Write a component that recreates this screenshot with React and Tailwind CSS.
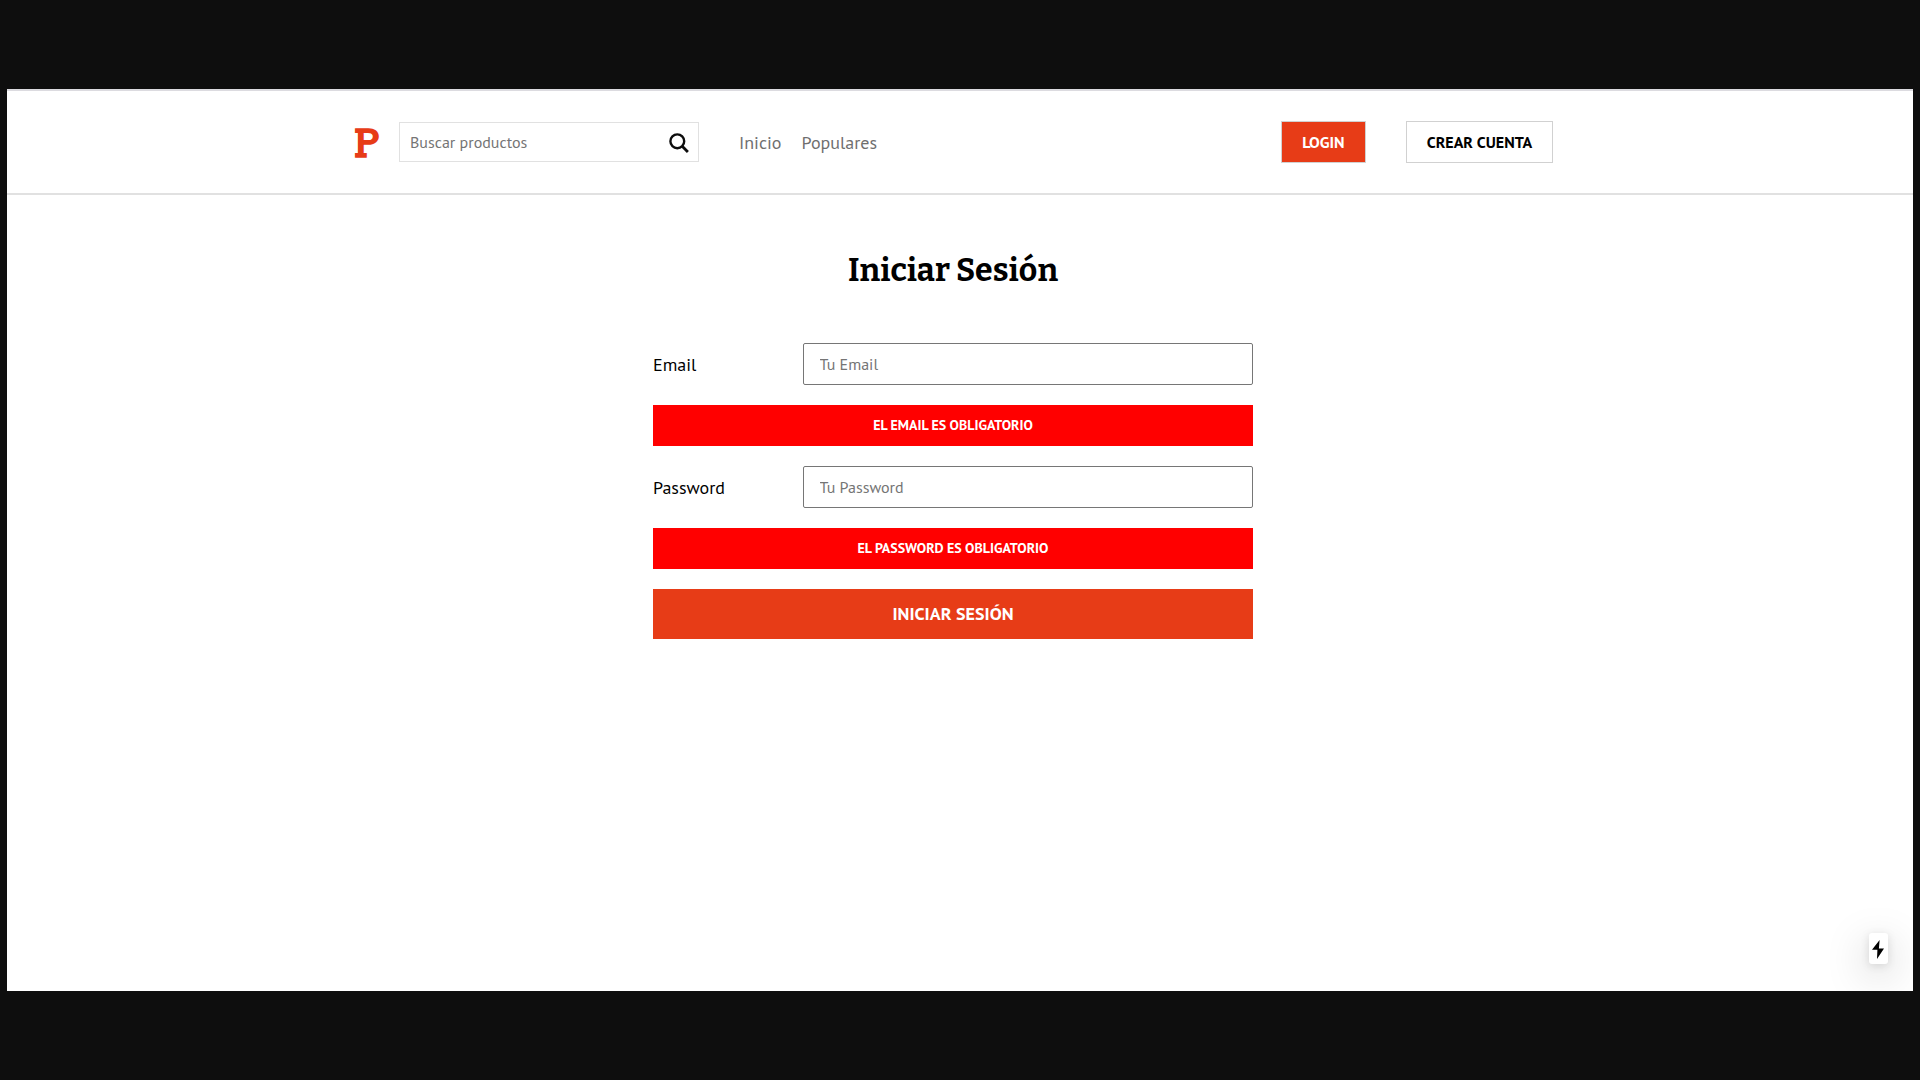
const sans = "font-['PT_Sans','Noto_Sans',sans-serif]";
const heading = "font-['Roboto_Slab','Bitter','DejaVu_Serif_Condensed',serif]";
const logo = "font-['Roboto_Slab','Arvo','DejaVu_Serif_Condensed',serif]";

function Field({ label, type, placeholder, error }) {
  return (
    <>
      <div className="mb-5 flex h-[42px] items-center">
        <label className="w-[150px] text-[18px]">{label}</label>
        <input
          type={type}
          placeholder={placeholder}
          className="h-full flex-1 rounded-[2px] border border-[#767676] bg-white px-[15.5px] text-[16px] placeholder:text-[#757575]"
        />
      </div>
      <p className="mb-5 flex h-[41px] items-center justify-center bg-[#ff0000] pb-px text-[14px] font-bold text-white uppercase">
        {error}
      </p>
    </>
  );
}

function Header() {
  return (
    <header className="h-[104px] border-b-2 border-[#e1e1e1] pr-[14px]">
      <div className="mx-auto flex h-full w-[1200px] items-center">
        <a className={`${logo} w-[46px] origin-left scale-x-110 pt-px text-[38px] leading-[48px] font-normal text-[#e73c17] [-webkit-text-stroke:1.6px_#e73c17]`}>
          P
        </a>
        <form className="flex h-10 w-[300px] items-center justify-between border border-[#e1e1e1] pr-[9px] pl-[10px]">
          <input
            placeholder="Buscar productos"
            className="w-[220px] bg-transparent text-[16px] placeholder:text-[#757575]"
          />
          <svg className="mt-px h-5 w-5" viewBox="0 0 20 20" fill="none" stroke="#0d0d0d">
            <circle cx="8.3" cy="8.3" r="6.9" strokeWidth="2.4" />
            <path d="M13.2 13.2 18.9 18.9" strokeWidth="2.8" />
          </svg>
        </form>
        <nav className="ml-10 flex gap-5 text-[18px] text-[#6f6f6f]">
          <a>Inicio</a>
          <a>Populares</a>
        </nav>
        <div className="ml-auto flex gap-10 text-[16px] font-bold">
          <a className="flex h-[42px] w-[85px] items-center justify-center border border-[#d1d1d1] bg-[#e73c17] text-white">
            LOGIN
          </a>
          <a className="flex h-[42px] w-[147px] items-center justify-center border border-[#d1d1d1] text-black">
            CREAR CUENTA
          </a>
        </div>
      </div>
    </header>
  );
}

export default function App() {
  return (
    <div className={`${sans} h-[1080px] w-[1920px] overflow-hidden bg-[#0e0e0e] pt-[89px] pr-[7px] pl-[7px] text-black`}>
      <div className="relative h-[902px] overflow-hidden border-t-2 border-[#dcdbe0] bg-white">
        <Header />
        <main className="mx-auto w-full pr-[14px]">
          <h1 className={`${heading} mt-[51px] text-center text-[32px] leading-[48px] font-bold tracking-[0.1px]`}>
            Iniciar Sesión
          </h1>
          <form className="mx-auto mt-[49px] w-[600px]">
            <Field label="Email" type="email" placeholder="Tu Email" error="El email es obligatorio" />
            <Field label="Password" type="password" placeholder="Tu Password" error="El password es obligatorio" />
            <button type="button" className="h-[50px] w-full bg-[#e73c17] pb-0.5 text-[18px] font-bold text-white uppercase">
              Iniciar Sesión
            </button>
          </form>
        </main>
        <div className="absolute right-[25px] bottom-[27px] flex h-[31px] w-[19px] items-center justify-center rounded-[3px] bg-white shadow-[0_11px_40px_0_rgba(0,0,0,0.25),0_2px_10px_0_rgba(0,0,0,0.12)]">
          <svg className="mt-px mr-px h-[19px] w-3" viewBox="0 0 12 19" fill="#000">
            <path d="M7.6 0 0 9.8H5.4L5 19 12 8.6H6.9Z" />
          </svg>
        </div>
      </div>
    </div>
  );
}
